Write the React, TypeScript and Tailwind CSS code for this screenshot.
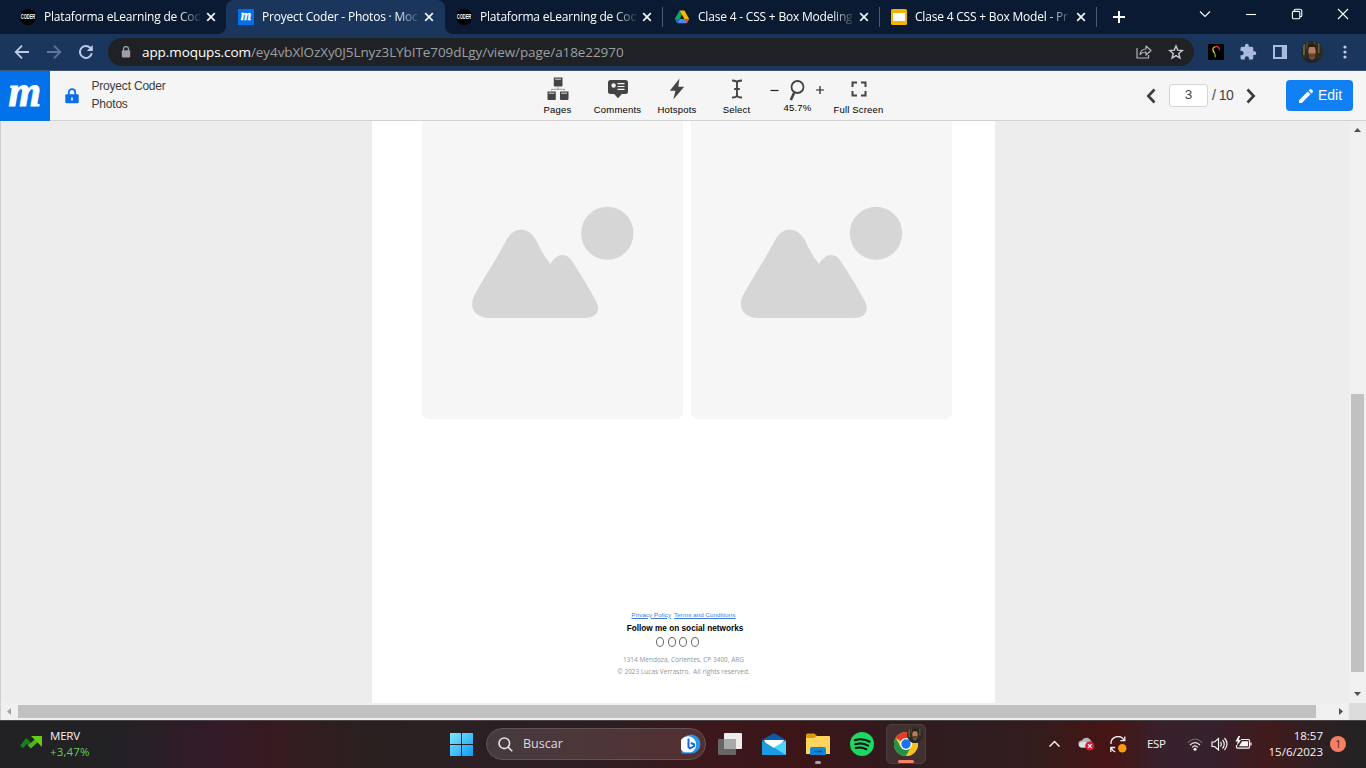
import type { ReactNode } from "react";

const UI = "font-['Open_Sans','Noto_Sans',sans-serif]";
const ARIAL = "font-['Liberation_Sans',Arial,sans-serif]";

function CoderIcon() {
  return (
    <svg width="16" height="16" viewBox="0 0 16 16">
      <circle cx="8" cy="8" r="8" fill="#000" />
      <text x="0.8" y="10.3" fontSize="6.4" fontWeight="700" fill="#fff" textLength="14.4" lengthAdjust="spacingAndGlyphs" fontFamily="Liberation Sans">CODER</text>
    </svg>
  );
}

function MoqupsMark({ size }: { size: number }) {
  return (
    <svg className="shrink-0" width={size} height={size} viewBox="0 0 50 50">
      <rect width="50" height="50" fill="#0271ea" />
      <text x="8.5" y="35" fontSize="44" fontWeight="700" fontStyle="italic" fill="#fff" stroke="#fff" strokeWidth="1" textLength="32.5" lengthAdjust="spacingAndGlyphs" fontFamily="Liberation Serif">m</text>
    </svg>
  );
}

function DriveIcon() {
  return (
    <svg width="16" height="16" viewBox="0 0 16 16">
      <path d="M5.6 1.5 0.8 9.8l2.5 4.4L8 5.8z" fill="#10a65a" />
      <path d="M5.6 1.5h4.8L15.2 10h-4.8z" fill="#ffba00" />
      <path d="M3.3 14.2 5.6 10h9.6l-2.4 4.2z" fill="#4688f4" />
      <path d="M0.8 9.8 3.3 14.2 5.6 10z" fill="#1d63d8" />
      <path d="M10.4 10h4.8l-2.4 4.2z" fill="#ea4335" />
    </svg>
  );
}

function SlidesIcon() {
  return (
    <svg width="16" height="16" viewBox="0 0 16 16">
      <rect width="16" height="16" rx="1.6" fill="#f5b400" />
      <rect x="2" y="4" width="12" height="8" fill="#fff" />
    </svg>
  );
}

function TabContent({ icon, title, textWidth = "w-[156px]" }: { icon: ReactNode; title: string; textWidth?: string }) {
  return (
    <>
      <span className="size-4 shrink-0">{icon}</span>
      <span className={`ml-2 shrink-0 whitespace-nowrap text-[12px] tracking-[-0.2px] text-white [mask-image:linear-gradient(to_right,black_86%,transparent_102%)] ${textWidth}`}>
        {title}
      </span>
      <svg className="ml-1.5 shrink-0" width="10" height="10" viewBox="0 0 10 10" stroke="#f2f4f8" strokeWidth="1.7">
        <path d="M1.2 1.2l7.6 7.6M8.8 1.2 1.2 8.8" />
      </svg>
    </>
  );
}

function TabStrip() {
  return (
    <div className="flex h-[34px] bg-[#0a1a32]">
      <div className="flex h-full w-[226px] items-center pl-5">
        <TabContent icon={<CoderIcon />} title="Plataforma eLearning de Cod" />
      </div>
      <div className="relative flex h-full w-[219px] items-center rounded-t-lg bg-[#1a365d] pl-3">
        <svg className="absolute bottom-0 -left-2" width="8" height="8" fill="#1a365d"><path d="M8 0v8H0a8 8 0 0 0 8-8z" /></svg>
        <TabContent icon={<MoqupsMark size={16} />} title="Proyect Coder - Photos · Moc" />
        <svg className="absolute -right-2 bottom-0" width="8" height="8" fill="#1a365d"><path d="M0 0v8h8a8 8 0 0 1-8-8z" /></svg>
      </div>
      <div className="flex h-full w-[217px] items-center pl-[11px]">
        <TabContent icon={<CoderIcon />} title="Plataforma eLearning de Cod" />
      </div>
      <div className="flex h-full w-[217px] items-center">
        <span className="h-5 w-px bg-[#4a5a73]" />
        <span className="w-[11px]" />
        <TabContent icon={<DriveIcon />} title="Clase 4 - CSS + Box Modeling" textWidth="w-[155px]" />
      </div>
      <div className="flex h-full w-[217px] items-center">
        <span className="h-5 w-px bg-[#4a5a73]" />
        <span className="w-[11px]" />
        <TabContent icon={<SlidesIcon />} title="Clase 4 CSS + Box Model - Pr" textWidth="w-[155px]" />
      </div>
      <div className="flex h-full flex-1 items-center">
        <span className="h-5 w-px bg-[#4a5a73]" />
        <svg className="ml-4" width="12" height="12" viewBox="0 0 12 12" stroke="#fff" strokeWidth="2"><path d="M6 0v12M0 6h12" /></svg>
      </div>
      <div className="flex h-7 w-[184px] items-center">
        {[
          <path key="a" d="M1 3.5 6 8.5 11 3.5" />,
          <path key="b" d="M1 6.5h10" />,
          <path key="c" d="M3.2 3.3V2.5a1.3 1.3 0 0 1 1.3-1.3h4.3a2 2 0 0 1 2 2v4.3a1.3 1.3 0 0 1-1.3 1.3H9M2.6 3.4h5a1.2 1.2 0 0 1 1.2 1.2v5a1.2 1.2 0 0 1-1.2 1.2h-5a1.2 1.2 0 0 1-1.2-1.2v-5a1.2 1.2 0 0 1 1.2-1.2z" />,
          <path key="d" d="M1 1l10 10M11 1 1 11" />,
        ].map((p, i) => (
          <span key={i} className="flex w-[46px] justify-center">
            <svg width="12" height="12" viewBox="0 0 12 12" fill="none" stroke="#fff" strokeWidth="1.1">{p}</svg>
          </span>
        ))}
      </div>
    </div>
  );
}

function Avatar({ size }: { size: number }) {
  return (
    <svg className="shrink-0" width={size} height={size} viewBox="0 0 22 22">
      <clipPath id="av"><circle cx="11" cy="11" r="11" /></clipPath>
      <g clipPath="url(#av)">
        <rect width="22" height="22" fill="#2d2c1e" />
        <path d="M2 0h2v14H2zM17 2h1.500v10H17z" fill="#5f6141" />
        <path d="M5 0h2v8H5zM13 0h1v5h-1z" fill="#43452c" />
        <path d="M2 22c0-5 4-6 9-6s9 2 9 6z" fill="#20252f" />
        <path d="M8 13h6v4l-3 2-3-2z" fill="#7c4f3e" />
        <ellipse cx="11" cy="10" rx="3.700" ry="5.200" fill="#b57c62" />
        <path d="M7.300 12c1 .6 2 .5 3.700.5s2.700.1 3.700-.5c0 2.600-1.500 4.600-3.700 4.600s-3.700-2-3.700-4.600z" fill="#684031" />
        <path d="M6.800 9C6.200 4.500 8.500 3 11 3s5 1.500 4.200 6L14 6H8z" fill="#2b1c18" />
      </g>
    </svg>
  );
}

function AddressBar() {
  return (
    <div className="flex h-[36px] items-center bg-[#1a365d]">
      <div className="flex w-[108px] items-center pl-[14px]">
        <svg width="16" height="16" viewBox="0 0 16 16" fill="none" stroke="#bccae6" strokeWidth="1.800"><path d="M15 8H2M8 1.700 1.700 8 8 14.300" /></svg>
        <svg className="ml-4" width="16" height="16" viewBox="0 0 16 16" fill="none" stroke="#5e7597" strokeWidth="1.800"><path d="M1 8h13M8 1.700 14.300 8 8 14.300" /></svg>
        <svg className="ml-4" width="16" height="16" viewBox="0 0 16 16" fill="none" stroke="#bccae6" strokeWidth="2"><path d="M13.800 9.200A6 6 0 1 1 12.300 3.800L14 5.500" /><path d="M14.800 1v6h-6z" fill="#bccae6" stroke="none" /></svg>
      </div>
      <div className="flex h-7 w-[1086px] items-center rounded-full bg-[#202124] pl-[13px]">
        <svg width="10" height="12" viewBox="0 0 10 12"><path d="M2.500 5V3a2.500 2.500 0 0 1 5 0v2" fill="none" stroke="#9aa0a6" strokeWidth="1.300" /><rect x="0.800" y="4.200" width="8.400" height="7.300" rx="1" fill="#9aa0a6" /></svg>
        <span className="ml-[11px] flex-1 whitespace-nowrap text-[13.500px] tracking-[-0.080px] text-[#9aa0a6]">
          <span className="text-white">app.moqups.com</span>/ey4vbXlOzXy0J5Lnyz3LYbITe709dLgy/view/page/a18e22970
        </span>
        <svg width="16" height="16" viewBox="0 0 16 16" fill="none" stroke="#b2b5ba" strokeWidth="1.200"><path d="M1 4v10h11.500v-3" /><path d="M4 10.500c.5-3.500 2.500-5.500 6-5.500V2l5 4.500-5 4.500V8c-3 0-4.500.8-6 2.500z" strokeLinejoin="round" /></svg>
        <svg className="mr-2.5 ml-4" width="16" height="16" viewBox="0 0 16 16" fill="none" stroke="#c8cacd" strokeWidth="1.400"><path d="m8 2 1.700 4.100 4.600.4-3.500 3 1.100 4.500L8 11.600 4.100 14l1.100-4.500-3.500-3 4.600-.4z" /></svg>
      </div>
      <div className="flex flex-1 items-center pl-[14px]">
        <svg width="16" height="16" viewBox="0 0 16 16" fill="none" strokeWidth="1.300"><rect width="16" height="16" fill="#000" /><path d="M5 6.500C4.500 4.200 6 2.800 7.800 2.600" stroke="#f7a400" /><path d="M7.500 2.600c1.800-.5 3.400.6 3.700 2" stroke="#ff224e" /><path d="M11.200 4.300c.3.900.2 1.400-.1 2" stroke="#b31cb8" /><path d="M5 6c.1 1.500.8 2 1.500 3" stroke="#ffe13a" /><path d="M6.400 8.800c.8 1 1 2.500.9 4.400" stroke="#3dc24d" /></svg>
        <svg className="ml-[15px]" width="18" height="18" viewBox="0 0 24 24" fill="#a9bbdc"><path d="M20.500 11H19V7a2 2 0 0 0-2-2h-4V3.500a2.500 2.500 0 0 0-5 0V5H4a2 2 0 0 0-2 2v3.800h1.500a2.700 2.700 0 0 1 0 5.400H2V20a2 2 0 0 0 2 2h3.800v-1.500a2.700 2.700 0 0 1 5.400 0V22H17a2 2 0 0 0 2-2v-4h1.500a2.500 2.500 0 0 0 0-5z" /></svg>
        <svg className="ml-4" width="14" height="14" viewBox="0 0 14 14"><path fillRule="evenodd" d="M0 0h14v14H0zM2 2v10h6.800V2z" fill="#a9bbdc" /></svg>
        <span className="ml-[14px]"><Avatar size={22} /></span>
        <svg className="ml-5" width="4" height="16" viewBox="0 0 4 16" fill="#c0ccdf"><circle cx="2" cy="3" r="1.600" /><circle cx="2" cy="8" r="1.600" /><circle cx="2" cy="13" r="1.600" /></svg>
      </div>
    </div>
  );
}

function Tool({ icon, label, width }: { icon: ReactNode; label: string; width: string }) {
  return (
    <div className={`flex flex-col items-center pt-1 ${width}`}>
      <span className="flex h-7 items-center pb-px">{icon}</span>
      <span className="mt-px text-[9.500px] leading-3 tracking-[0.180px] whitespace-nowrap text-black">{label}</span>
    </div>
  );
}

function AppHeader() {
  return (
    <div className={`flex h-[50px] items-start bg-[#f5f5f5] ${ARIAL}`}>
      <MoqupsMark size={50} />
      <div className="flex h-[50px] w-[478px] items-center border-b border-[#d2d2d2]">
        <svg className="ml-[15px]" width="14" height="16" viewBox="0 0 14 16"><path d="M3.800 7V4.300a3.200 3.200 0 0 1 6.400 0V7" fill="none" stroke="#0c6fe8" strokeWidth="1.800" /><rect x="0.300" y="6.300" width="13.400" height="9" rx="1.200" fill="#0c6fe8" /><path d="M6.200 9.400h1.600v3H6.200z" fill="#f5f5f5" /></svg>
        <div className="-mt-px ml-[12.500px] text-[12px] leading-[18px] tracking-[-0.200px] text-[#3d3d3d]">
          <div>Proyect Coder</div>
          <div>Photos</div>
        </div>
      </div>
      <div className="flex h-[50px] flex-1 border-b border-[#d2d2d2]">
        <Tool width="w-[59px]" label="Pages" icon={
          <svg width="22" height="24" viewBox="0 0 22 24" fill="#444"><path d="M6.800.5h8.700v8a1 1 0 0 1-1 1H7.800a1 1 0 0 1-1-1z" /><path d="M.5 14.500h8.300V22a1 1 0 0 1-1 1H1.500a1 1 0 0 1-1-1zM13 14.500h8.500V22a1 1 0 0 1-1 1H14a1 1 0 0 1-1-1z" /><path d="M8 2.200h6M1.700 16.200h5.700M14.200 16.200H20" stroke="#d9d9d9" strokeWidth="1" /><path d="M4.500 13.500v-1.200h13v1.200M11 10v2.300" fill="none" stroke="#888" strokeWidth=".8" /></svg>} />
        <Tool width="w-[61px]" label="Comments" icon={
          <svg width="20" height="20" viewBox="0 0 20 20" fill="#444"><path d="M2.500 1h15A2.500 2.500 0 0 1 20 3.500v9a2.500 2.500 0 0 1-2.500 2.500h-3.700L10 19.200 6.200 15H2.500A2.500 2.500 0 0 1 0 12.500v-9A2.500 2.500 0 0 1 2.500 1z" /><circle cx="5.600" cy="6.500" r="2.200" fill="#f5f5f5" /><path d="M9.500 4.700h7M9.500 7.500h7M9.500 10.300h7" stroke="#f5f5f5" strokeWidth="1.200" /></svg>} />
        <Tool width="w-[58px]" label="Hotspots" icon={
          <svg width="16" height="22" viewBox="0 0 16 22" fill="#444"><path d="M10.500.5.800 12.800h5.700L4.300 21.500 15.200 8.800H9.300z" /></svg>} />
        <Tool width="w-[61px]" label="Select" icon={
          <svg width="12" height="20" viewBox="0 0 12 20" fill="none" stroke="#444" strokeWidth="1.900"><path d="M1 1.500c3 0 5 .5 5 2.500v12c0 2-2 2.500-5 2.500M11 1.500c-3 0-5 .5-5 2.500M11 18.500c-3 0-5-.5-5-2.500M3.200 10h5.600" /></svg>} />
        <div className="flex w-[61px] flex-col items-center pt-[7px]">
          <div className="flex h-6 w-full items-center">
            <svg className="ml-[3px]" width="9" height="9" viewBox="0 0 9 9" stroke="#222" strokeWidth="1.200"><path d="M.5 4.500h8" /></svg>
            <svg className="mb-px ml-[9px]" width="17" height="22" viewBox="0 0 17 22" fill="none" stroke="#444"><circle cx="9.500" cy="8" r="6" strokeWidth="1.800" /><path d="M6.300 13.500 2.800 21" strokeWidth="2.600" /></svg>
            <svg className="mb-px ml-[11px]" width="8" height="8" viewBox="0 0 8 8" stroke="#222" strokeWidth="1.200"><path d="M0 4h8M4 0v8" /></svg>
          </div>
          <span className="text-[9.500px] leading-3 tracking-[0.180px] text-black">45.7%</span>
        </div>
        <Tool width="w-[61px]" label="Full Screen" icon={
          <svg width="16" height="16" viewBox="0 0 16 16" fill="none" stroke="#444" strokeWidth="2"><path d="M1.500 6V1.500H6M10 1.500h4.500V6M14.500 10v4.500H10M6 14.500H1.500V10" /></svg>} />
        <div className="ml-[257px] flex h-[49px] items-center text-[#444]">
          <svg width="10" height="16" viewBox="0 0 10 16" fill="none" stroke="#3c3c3c" strokeWidth="2.600"><path d="M8.500 1.500 2.300 8l6.200 6.500" /></svg>
          <span className="ml-[13px] flex h-[23px] w-[39px] items-center justify-center rounded-[3px] border border-[#d4d4d4] bg-white text-[13.500px]">3</span>
          <span className="ml-[4px] w-[24px] text-[14px] tracking-[-0.500px] whitespace-nowrap">/ 10</span>
          <svg className="ml-[10px]" width="10" height="16" viewBox="0 0 10 16" fill="none" stroke="#3c3c3c" strokeWidth="2.600"><path d="M1.500 1.500 7.700 8l-6.200 6.500" /></svg>
          <button className="ml-[30px] flex h-[31px] w-[67px] items-center rounded bg-[#1180f3] pl-[13px] text-[14px] text-white">
            <svg width="14" height="14" viewBox="0 0 14 14" fill="#fff"><path d="M0 14v-2.800L8.700 2.500l2.800 2.800L2.800 14zM9.600 1.600 10.800.4a1.200 1.200 0 0 1 1.700 0l1.100 1.100a1.200 1.200 0 0 1 0 1.700l-1.200 1.200z" /></svg>
            <span className="ml-[5px]">Edit</span>
          </button>
        </div>
      </div>
    </div>
  );
}

function PhotoPlaceholder({ width, offset }: { width: string; offset: number }) {
  return (
    <div className={`h-[297.500px] rounded-b-[7px] bg-[#f6f6f6] ${width}`}>
      <svg width="260" height="297" viewBox={`${-offset} 0 260 297`} fill="#d6d6d6">
        <ellipse cx="185.300" cy="112.300" rx="26.200" ry="26.500" />
        <path d="M52.500 174 C62 157 72 142 84.500 119 C92 105 106 105 114 119 C120 131 121 133 128.300 143 C135 131 145 132 150 140 C157 151 165 163 173.500 179 C179.500 190 174 197 163 197 H68 C51 197 47 185 52.500 174z" />
      </svg>
    </div>
  );
}

function Canvas() {
  return (
    <div className="flex h-[582px] border-l border-[#cfcfcf] bg-[#ededed]">
      <div className="ml-[371px] flex h-[582px] w-[623px] flex-col bg-white">
        <div className="flex gap-[8px] pl-[49.500px]">
          <PhotoPlaceholder width="w-[261.500px]" offset={0} />
          <PhotoPlaceholder width="w-[261px]" offset={-0.3} />
        </div>
        <div className={`mt-[192px] flex flex-col items-center ${ARIAL}`}>
          <div className="flex h-[8px] gap-[3px] text-[6.200px] leading-[8px] tracking-[0.080px] text-[#3b7de0] underline">
            <span>Privacy Policy</span><span>Terms and Conditions</span>
          </div>
          <div className="mt-[4px] ml-[3px] h-[11px] text-[8.200px] leading-[11px] font-bold tracking-[0.020px] whitespace-nowrap text-black">Follow me on social networks</div>
          <div className="mt-[3px] mr-[12px] flex gap-[3.700px]">
            {[0, 1, 2, 3].map((n) => <span key={n} className="h-[10px] w-[8px] rounded-[50%] border border-[#666]" />)}
          </div>
          <div className={`mt-[7px] h-[12px] text-[6.500px] leading-[12px] text-[#959595] ${UI}`}>1314 Mendoza, Corientes, CP 3400, ARG</div>
          <div className={`h-[12px] text-[6.500px] leading-[12px] whitespace-pre text-[#959595] ${UI}`}>{"© 2023 Lucas Verrastro.  All rights reserved."}</div>
        </div>
      </div>
      <div className="flex-1" />
      <div className="flex w-[17px] flex-col items-center bg-[#f0f0f0]">
        <svg className="mt-[7px]" width="7" height="4" fill="#505050"><path d="M0 4 3.500 0 7 4z" /></svg>
        <div className="mt-[262px] h-[278px] w-[13px] bg-[#c1c1c1]" />
        <svg className="mt-[20px]" width="7" height="4" fill="#505050"><path d="M0 0h7L3.500 4z" /></svg>
      </div>
    </div>
  );
}

function HorizontalScroll() {
  return (
    <div className="flex h-[17px] items-center border-l border-[#cfcfcf] bg-[#f0f0f0]">
      <svg className="ml-[6px]" width="4" height="7" fill="#a3a3a3"><path d="M4 0v7L0 3.500z" /></svg>
      <div className="ml-[7px] h-[13px] w-[1298px] bg-[#c1c1c1]" />
      <svg className="ml-[23px]" width="4" height="7" fill="#505050"><path d="M0 0v7l4-3.500z" /></svg>
      <div className="ml-auto h-full w-[17px] bg-[#dcdcdc]" />
    </div>
  );
}

function ChromeLogo() {
  return (
    <svg width="24" height="24" viewBox="0 0 24 24">
      <circle cx="12" cy="12" r="12" fill="#ffcd40" />
      <path d="M12 12 1.600 6A12 12 0 0 1 22.400 6H12z" fill="#e33b2e" />
      <path d="M1.600 6A12 12 0 0 0 12 24l5.200-9L12 12 6.800 15z" fill="#229342" />
      <path d="M12 24A12 12 0 0 0 22.400 6H12l5.200 9z" fill="#fbc116" />
      <circle cx="12" cy="12" r="6" fill="#fff" /><circle cx="12" cy="12" r="4.700" fill="#1a73e8" />
    </svg>
  );
}

function Taskbar() {
  return (
    <div className="flex h-12 items-center border-t border-[#4a4345] bg-[linear-gradient(to_right,#222124_0px,#232125_120px,#351a29_220px,#371a20_270px,#321e1e_310px,#2a2020_370px,#2b2023_450px,#2e1e23_600px,#3b181c_700px,#3c1518_790px,#33191c_880px,#2e1d20_960px,#351c1c_1040px,#461514_1110px,#38202c_1160px,#35202d_1210px,#421a1c_1270px,#2c2022_1320px,#222_1366px)] pb-px text-[#f5f5f5]">
      <div className="flex w-[450px] items-center pl-5">
        <svg className="-mt-1" width="22" height="14" viewBox="0 0 22 14"><path d="M1.500 12 6.500 6 11 10.500" fill="none" stroke="#15801f" strokeWidth="4" /><path d="M9.500 12 17 5" stroke="#50b51c" strokeWidth="4" /><path d="M11 1h11v11z" fill="#65cc16" /></svg>
        <div className="ml-2 text-[11.500px] leading-4">
          <div className="tracking-[-0.200px]">MERV</div>
          <div className="tracking-[0.150px] text-[#6ccb5f]">+3,47%</div>
        </div>
      </div>
      <svg width="23" height="23" viewBox="0 0 23 23"><defs><linearGradient id="win" x1="0" y1="0" x2="1" y2="1"><stop offset="0" stopColor="#7eeaff" /><stop offset="1" stopColor="#0f98f7" /></linearGradient></defs><path d="M0 0h11v11H0zM12 0h11v11H12zM0 12h11v11H0zM12 12h11v11H12z" fill="url(#win)" /></svg>
      <div className="ml-[13px] flex h-8 w-[220px] items-center rounded-full border border-[#605556] bg-linear-to-r from-[#453b40] to-[#542f31] pl-[11px]">
        <svg width="15" height="15" viewBox="0 0 15 15" fill="none" stroke="#e4e2e2" strokeWidth="1.600"><circle cx="6.300" cy="6.300" r="5.300" /><path d="m10 10 4.300 4.300" /></svg>
        <span className="mt-px ml-[10px] flex-1 text-[12.500px] text-[#dfdbdc]">Buscar</span>
        <svg className="mr-[4px]" width="20" height="20" viewBox="0 0 20 20"><path d="M.5 19.500V10A9.500 9.500 0 1 1 10 19.500z" fill="#2697e8" /><path d="M3 18A8.300 8.300 0 1 1 10 18.300H4z" fill="#fff" /><path d="M7.500 4.500v8.500l1.500 1.500 4-2.300v-2L9.800 9" fill="none" stroke="#1769dc" strokeWidth="2" strokeLinejoin="round" /></svg>
      </div>
      <svg className="ml-3" width="24" height="22" viewBox="0 0 24 22"><rect x="6" width="18" height="16" rx="1" fill="#ececec" /><rect y="6" width="18" height="16" rx="1" fill="#696565" /><path d="M6 6h12v10H6z" fill="#a9a9a9" /></svg>
      <svg className="ml-5" width="24" height="22" viewBox="0 0 24 22"><path d="M0 7 12 0l12 7v8H0z" fill="#0b5bab" /><path d="M2 7h20l-4 8H6z" fill="#fff" /><path d="M0 7.500 12 15l12-7.500V22H0z" fill="#1c9be3" /><path d="M12 14.500 24 7.500V22z" fill="#50d5fa" /></svg>
      <div className="relative ml-5 flex h-10 w-6 items-center">
        <svg width="24" height="22" viewBox="0 0 24 22"><path d="M1 .5h7.500L11 3v3H0V1.500z" fill="#dc9a0c" /><path d="M0 5h8.500l2-2H23a1 1 0 0 1 1 1v17H0z" fill="#ffd55b" /><path d="M4 22v-6a2 2 0 0 1 2-2h12a2 2 0 0 1 2 2v6z" fill="#1685d8" /><path d="M8 18.500h8" stroke="#0a599f" strokeWidth="1.500" /></svg>
        <span className="absolute bottom-0 left-[9px] h-[3px] w-1.5 rounded-full bg-[#aaa0a1]" />
      </div>
      <svg className="ml-5" width="24" height="24" viewBox="0 0 24 24"><circle cx="12" cy="12" r="12" fill="#1ed760" /><path d="M4.800 8.200c5-1.500 10.500-1 14.800 1.500M5.300 12.200c4.500-1.200 9-.8 12.800 1.400M5.800 16c4-.9 7.500-.5 10.600 1.300" fill="none" stroke="#111" strokeWidth="2" strokeLinecap="round" /></svg>
      <div className="relative ml-3 flex h-10 w-10 items-center justify-center rounded-[5px] border border-[#4b3e40] bg-[#40302f]">
        <ChromeLogo />
        <span className="absolute top-[2px] right-[2px]"><Avatar size={16} /></span>
        <span className="absolute bottom-0 left-[11px] h-[3px] w-4 rounded-full bg-[#fa8066]" />
      </div>
      <svg className="ml-[123px]" width="11" height="8" viewBox="0 0 11 8" fill="none" stroke="#f5f5f5" strokeWidth="1.500"><path d="M.5 6.500 5.500 1.500l5 5" /></svg>
      <svg className="ml-[18px]" width="17" height="14" viewBox="0 0 17 14"><path d="M4 10.500a3.500 3.500 0 0 1-.2-7A5 5 0 0 1 13 4c2 1 1.500 6.500-1 6.500z" fill="#b9b3b5" /><path d="M2 6c3-2 6-2 9 2v2.500H4C1 10.500 0 8 2 6z" fill="#e2dfe0" /><circle cx="11.800" cy="9" r="4.600" fill="#d11e36" /><path d="m10 7.200 3.600 3.600m0-3.600L10 10.800" stroke="#fff" strokeWidth="1.200" /></svg>
      <svg className="ml-[15px]" width="17" height="17" viewBox="0 0 17 17" fill="none" stroke="#f4f0f0" strokeWidth="1.300"><path d="M1 8A7 7 0 0 1 14 4M14.800.5v4.200h-4.500M.8 16v-4.500h4.400M1.300 12a7 7 0 0 0 4 4" /><circle cx="12.300" cy="12.300" r="4.200" fill="#ff9a0a" stroke="none" /></svg>
      <span className="ml-[20px] w-[21px] text-[11.500px] tracking-[-0.300px]">ESP</span>
      <svg className="ml-[19px]" width="16" height="13" viewBox="0 0 16 13" fill="none" strokeWidth="1.200"><path d="M.8 5c4-5 10.400-5 14.400 0" stroke="#756970" /><path d="M3 7.200c3-3.400 7-3.400 10 0M5.200 9.300c1.800-1.800 3.800-1.800 5.600 0" stroke="#f5f5f5" /><circle cx="8" cy="11.300" r="1.500" fill="#fff" /></svg>
      <svg className="ml-[8px]" width="17" height="14" viewBox="0 0 17 14" fill="none" stroke="#f5f5f5" strokeWidth="1.200"><path d="M1 5v4.500h2.500L7.500 13V1.500L3.500 5zM9.500 5c1 1 1 3.500 0 4.500M11.500 3c2.300 2.300 2.300 6 0 8.500M13.500 1c3.300 3.500 3.300 8.500 0 12" /></svg>
      <svg className="-mt-0.5 ml-[7px]" width="17" height="14" viewBox="0 0 17 14" fill="none" stroke="#f5f5f5" strokeWidth="1.200"><path d="M6 3.500h7.500a1 1 0 0 1 1 1v6.600a1 1 0 0 1-1 1h-11a1 1 0 0 1-1-1V9M16 6.500v3" /><path d="M7 5.300h6v5H4z" fill="#f5f5f5" stroke="none" /><path d="M3.500 0 .5 5.500h2.200L2 9.500 6 4H3.800L5 0z" fill="#fff" stroke="none" /></svg>
      <div className="flex-1 pr-[7px] text-right text-[11.500px] leading-4">
        <div>18:57</div>
        <div>15/6/2023</div>
      </div>
      <span className="mr-5 flex size-4 items-center justify-center rounded-full bg-[#f57e64] text-[10px] text-[#472322]">1</span>
    </div>
  );
}

export default function App() {
  return (
    <div className={`flex h-[768px] w-[1366px] flex-col overflow-hidden ${UI}`}>
      <TabStrip />
      <AddressBar />
      <div className="h-px bg-[#3a5379]" />
      <AppHeader />
      <Canvas />
      <HorizontalScroll />
      <Taskbar />
    </div>
  );
}
